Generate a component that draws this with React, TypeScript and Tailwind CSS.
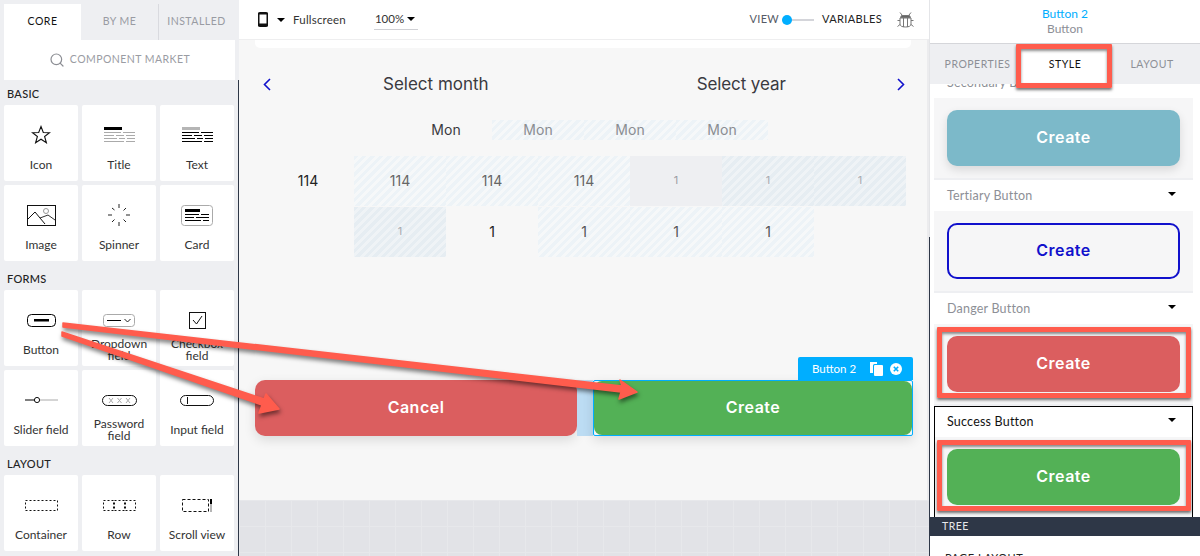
import React from 'react';
import { Search } from 'lucide-react';

const Dash = ({ x1, x2, y, c = '#000', d }: { x1: number; x2: number; y: number; c?: string; d?: string }) => (
  <line x1={x1} x2={x2} y1={y} y2={y} stroke={c} strokeWidth="1" strokeDasharray={d} />
);

const StarIcon = () => (
  <svg width="20" height="20" viewBox="0 0 20 20" fill="none" stroke="#111" strokeWidth="1.1">
    <polygon points="10,1.5 12.3,7.5 18.5,7.7 13.6,11.5 15.4,17.8 10,14.2 4.6,17.8 6.4,11.5 1.5,7.7 7.7,7.5" />
  </svg>
);

const TitleIcon = () => (
  <svg width="31" height="16" viewBox="0 0 31 16">
    <rect x="0" y="0" width="18" height="3" fill="#000" />
    <Dash x1={0} x2={31} y={5.5} c="#aaa" d="17 2 12" />
    <Dash x1={0} x2={31} y={8.5} c="#aaa" d="10 2 8 2 9" />
    <Dash x1={0} x2={31} y={11.5} c="#aaa" d="13 2 6 2 8" />
    <Dash x1={0} x2={31} y={14.5} c="#aaa" d="20 2 9" />
  </svg>
);

const TextIcon = () => (
  <svg width="31" height="16" viewBox="0 0 31 16">
    <rect x="0" y="0" width="18" height="3" fill="#b5b5b5" />
    <Dash x1={0} x2={31} y={5.5} d="17 2 12" />
    <Dash x1={0} x2={31} y={8.5} d="10 2 8 2 9" />
    <Dash x1={0} x2={31} y={11.5} d="13 2 6 2 8" />
    <Dash x1={0} x2={31} y={14.5} d="20 2 9" />
  </svg>
);

const ImageIcon = () => (
  <svg width="29" height="21" viewBox="0 0 29 21" fill="none" stroke="#111" strokeWidth="1">
    <rect x="0.5" y="0.5" width="28" height="20" />
    <polyline points="1,14 8,7 18,19" />
    <polyline points="13,13 21,10 28,15" stroke="#333" />
    <circle cx="19" cy="6" r="2.5" stroke="#999" />
  </svg>
);

const SpinnerIcon = () => (
  <svg width="24" height="24" viewBox="0 0 24 24" stroke="#222" strokeWidth="1">
    <line x1="12" y1="1" x2="12" y2="5" />
    <line x1="12" y1="19" x2="12" y2="23" />
    <line x1="1" y1="12" x2="5" y2="12" />
    <line x1="19" y1="12" x2="23" y2="12" />
    <line x1="5" y1="5" x2="7.5" y2="7" />
    <line x1="19" y1="5" x2="16.5" y2="7.5" />
    <line x1="5" y1="19" x2="7.5" y2="16.5" />
    <line x1="19" y1="19" x2="16.5" y2="16.5" />
  </svg>
);

const CardIcon = () => (
  <svg width="32" height="21" viewBox="0 0 32 21" fill="none">
    <rect x="0.5" y="0.5" width="31" height="20" rx="3" stroke="#aaa" />
    <rect x="4" y="4" width="15" height="3" fill="#000" />
    <Dash x1={4} x2={28} y={9.5} d="14 2 8" />
    <Dash x1={4} x2={28} y={12.5} d="9 2 13" />
    <Dash x1={4} x2={28} y={15.5} d="16 2 6" />
  </svg>
);

const ButtonIcon = () => (
  <svg width="29" height="13" viewBox="0 0 29 13" fill="none">
    <rect x="0.5" y="0.5" width="28" height="12" rx="4" stroke="#000" />
    <rect x="7" y="5" width="15" height="2.5" fill="#000" />
  </svg>
);

const DropdownIcon = () => (
  <svg width="33" height="13" viewBox="0 0 33 13" fill="none">
    <rect x="0.5" y="0.5" width="31" height="12" rx="3" stroke="#aaa" />
    <Dash x1={4} x2={18} y={6.5} />
    <polyline points="21.5,5 24.5,8 27.5,5" stroke="#222" />
  </svg>
);

const CheckboxIcon = () => (
  <svg width="17" height="17" viewBox="0 0 17 17" fill="none" stroke="#111">
    <rect x="0.5" y="0.5" width="16" height="16" />
    <polyline points="4,8 7.5,12 13,4" />
  </svg>
);

const SliderIcon = () => (
  <svg width="33" height="10" viewBox="0 0 33 10" fill="none">
    <Dash x1={0} x2={10} y={5} />
    <Dash x1={15} x2={33} y={5} c="#aaa" />
    <circle cx="12" cy="5" r="2.6" stroke="#111" />
  </svg>
);

const PasswordIcon = () => (
  <svg width="35" height="11" viewBox="0 0 35 11" fill="none">
    <rect x="0.5" y="0.5" width="34" height="10" rx="5" stroke="#111" />
    <g stroke="#aaa">
      <path d="M7 3l4 5M11 3l-4 5M15.5 3l4 5M19.5 3l-4 5M24 3l4 5M28 3l-4 5" />
    </g>
  </svg>
);

const InputIcon = () => (
  <svg width="34" height="11" viewBox="0 0 34 11" fill="none" stroke="#111">
    <rect x="0.5" y="0.5" width="33" height="10" rx="5" />
    <line x1="7.5" y1="2" x2="7.5" y2="9" />
  </svg>
);

const ContainerIcon = () => (
  <svg width="33" height="11" viewBox="0 0 33 11" fill="none" stroke="#111" strokeDasharray="2 2">
    <rect x="0.5" y="0.5" width="32" height="10" />
  </svg>
);

const RowIcon = () => (
  <svg width="33" height="11" viewBox="0 0 33 11" fill="none" stroke="#111" strokeDasharray="2 2">
    <rect x="0.5" y="0.5" width="10" height="10" />
    <rect x="11.5" y="0.5" width="10" height="10" />
    <rect x="22.5" y="0.5" width="10" height="10" />
  </svg>
);

const ScrollIcon = () => (
  <svg width="31" height="13" viewBox="0 0 31 13" fill="none">
    <rect x="0.5" y="0.5" width="26" height="12" stroke="#111" strokeDasharray="3 2" />
    <rect x="28" y="0" width="2" height="5" fill="#000" />
    <rect x="28" y="5" width="2" height="8" fill="#b5b5b5" />
  </svg>
);

type TileItem = { label: React.ReactNode; icon: React.ReactNode };

const Tile = ({ label, icon }: TileItem) => (
  <div className="flex h-[76px] w-[74px] flex-col items-center rounded-[2px] bg-white pt-3">
    <div className="flex h-9 items-center justify-center">{icon}</div>
    <div className="flex h-6 items-center text-center text-[12px] leading-[12px] text-[#333]">{label}</div>
  </div>
);

const TileGrid = ({ items }: { items: TileItem[] }) => (
  <div className="ml-1 grid w-[230px] grid-cols-[74px_74px_74px] gap-1">
    {items.map((t, i) => (
      <Tile key={i} {...t} />
    ))}
  </div>
);

const SectionLabel = ({ children, className }: { children: React.ReactNode; className: string }) => (
  <div className={`pl-[7px] text-[11px] font-medium leading-none tracking-[0.3px] text-[#222] ${className}`}>{children}</div>
);

const Sidebar = () => (
  <div className="flex w-[239px] shrink-0 flex-col bg-[#eeeff2] font-['Lato',sans-serif]">
    <div>
      <div className="flex pt-1 pl-1 text-[10.5px] tracking-[0.5px]">
        <div className="flex h-9 w-[77px] items-center justify-center bg-white text-[#111]">CORE</div>
        <div className="flex h-9 w-[77px] items-center justify-center text-[#999ba3]">BY ME</div>
        <div className="flex h-9 w-[76px] items-center justify-center border-l border-[#d9dadf] text-[#999ba3]">INSTALLED</div>
      </div>
      <div className="ml-1 flex h-10 w-[231px] items-center justify-center gap-[5px] bg-white text-[10.5px] tracking-[0.45px] text-[#9a9ca3]">
        <Search size={16} strokeWidth={1.8} className="text-[#8c8e94]" />
        COMPONENT MARKET
      </div>
    </div>
    <div className="flex-1 border-r border-[#2e3747]">
      <SectionLabel className="pt-2 pb-[6px]">BASIC</SectionLabel>
      <TileGrid
        items={[
          { label: 'Icon', icon: <StarIcon /> },
          { label: 'Title', icon: <TitleIcon /> },
          { label: 'Text', icon: <TextIcon /> },
          { label: 'Image', icon: <ImageIcon /> },
          { label: 'Spinner', icon: <SpinnerIcon /> },
          { label: 'Card', icon: <CardIcon /> },
        ]}
      />
      <SectionLabel className="pt-[12px] pb-[6px]">FORMS</SectionLabel>
      <TileGrid
        items={[
          { label: 'Button', icon: <ButtonIcon /> },
          { label: <>Dropdown<br />field</>, icon: <DropdownIcon /> },
          { label: <>Checkbox<br />field</>, icon: <CheckboxIcon /> },
          { label: 'Slider field', icon: <SliderIcon /> },
          { label: <>Password<br />field</>, icon: <PasswordIcon /> },
          { label: 'Input field', icon: <InputIcon /> },
        ]}
      />
      <SectionLabel className="pt-[12px] pb-[6px]">LAYOUT</SectionLabel>
      <TileGrid
        items={[
          { label: 'Container', icon: <ContainerIcon /> },
          { label: 'Row', icon: <RowIcon /> },
          { label: 'Scroll view', icon: <ScrollIcon /> },
        ]}
      />
    </div>
  </div>
);

const Caret = ({ className = '' }: { className?: string }) => (
  <span className={`inline-block h-0 w-0 border-x-[4px] border-t-[4px] border-x-transparent border-t-black ${className}`} />
);

const PhoneIcon = () => (
  <svg width="10" height="15" viewBox="0 0 10 15" fill="none">
    <rect x="0.75" y="0.75" width="8.5" height="13.5" rx="1.5" stroke="#111" strokeWidth="1.5" />
    <rect x="0" y="11.5" width="10" height="3" rx="1" fill="#111" />
    <rect x="0" y="0.5" width="10" height="2" rx="1" fill="#111" />
  </svg>
);

const BugIcon = () => (
  <svg width="17" height="16" viewBox="0 0 17 16" fill="none" stroke="#777" strokeWidth="1">
    <path d="M3 0.5l2 2.5M14 0.5l-2 2.5" />
    <path d="M4.5 3.5h8l1 2h-10z" fill="#666" />
    <path d="M3 6h11v6c0 2-2 3-5.5 3S3 14 3 12z" />
    <path d="M6.5 6v9M10.5 6v9" />
    <path d="M3 8.5H0.5M14 8.5h2.5M3 12.5l-2.5 2M14 12.5l2.5 2" />
  </svg>
);

const TopBar = () => (
  <div className="flex h-[39px] items-center bg-white pl-[19px] pr-[15px] font-['Lato',sans-serif] text-[#333]">
    <PhoneIcon />
    <Caret className="ml-[9px]" />
    <span className="ml-2 text-[11.5px] tracking-[0.2px]">Fullscreen</span>
    <div className="ml-[28px] flex h-[21px] w-11 items-center gap-[3px] border-b border-[#cfd0d4] pl-px text-[11.5px] text-[#333]">
      100%
      <Caret />
    </div>
    <div className="ml-auto text-[11px] tracking-[0.3px] text-[#555a66]">VIEW</div>
    <div className="relative ml-[3px] h-[2px] w-8 bg-[#d4d5da]">
      <span className="absolute top-[-4px] left-0 h-[10px] w-[10px] rounded-full bg-[#00aeff]" />
    </div>
    <div className="ml-2 text-[11px] tracking-[0.35px] text-[#222]">VARIABLES</div>
    <div className="ml-[15px]">
      <BugIcon />
    </div>
  </div>
);

const hatchLight = 'bg-[repeating-linear-gradient(135deg,#edf3f7_0,#edf3f7_3px,#f6f8f9_3px,#f6f8f9_6px)]';
const hatchDark = 'bg-[repeating-linear-gradient(135deg,#e6edf2_0,#e6edf2_3px,#eff3f6_3px,#eff3f6_6px)]';

const poppins = "font-['Inter',sans-serif]";

const Chevron = ({ dir }: { dir: 'l' | 'r' }) => (
  <svg width="8" height="13" viewBox="0 0 8 13" fill="none" stroke="#1111cc" strokeWidth="1.6">
    <polyline points={dir === 'l' ? '7,1 1.5,6.5 7,12' : '1,1 6.5,6.5 1,12'} />
  </svg>
);

const Cell = ({ text, cls, tone }: { text?: string; cls?: string; tone: string }) => (
  <div className={`flex h-[50px] w-[92px] items-center justify-center pb-[2px] ${tone} ${cls ?? ''}`}>{text}</div>
);

const Calendar = () => (
  <div className={poppins}>
    <div className="mt-4 flex h-10 items-center pl-6 pr-[22px]">
      <Chevron dir="l" />
      <span className="ml-[112px] pt-[2px] text-[17px] text-[#3a3a3f]">Select month</span>
      <span className="ml-[208px] pt-[2px] text-[17px] tracking-[-0.1px] text-[#3a3a3f]">Select year</span>
      <span className="ml-auto">
        <Chevron dir="r" />
      </span>
    </div>
    <div className="mt-4 ml-[161px] flex h-5 text-[14px] leading-5">
      <div className="w-[92px] text-center text-[#3a3a3f]">Mon</div>
      {[0, 1, 2].map((i) => (
        <div key={i} className={`w-[92px] text-center text-[#8a8d92] ${hatchLight}`}>
          Mon
        </div>
      ))}
    </div>
    <div className="mt-4 ml-[23px] flex">
      <Cell text="114" tone="text-[14px] text-[#222]" />
      <Cell text="114" tone="text-[14px] text-[#666]" cls={hatchLight} />
      <Cell text="114" tone="text-[14px] text-[#666]" cls={hatchLight} />
      <Cell text="114" tone="text-[14px] text-[#666]" cls={hatchLight} />
      <Cell text="1" tone="text-[11px] text-[#9a9ca3]" cls="bg-[#eeeff2]" />
      <Cell text="1" tone="text-[11px] text-[#a8abb0]" cls={hatchDark} />
      <Cell text="1" tone="text-[11px] text-[#a8abb0]" cls={hatchDark} />
    </div>
    <div className="mt-px ml-[23px] flex">
      <Cell tone="" />
      <Cell text="1" tone="text-[11px] text-[#a8abb0]" cls={hatchDark} />
      <Cell text="1" tone="text-[14px] text-[#222]" />
      <Cell text="1" tone="text-[14px] text-[#555]" cls={hatchLight} />
      <Cell text="1" tone="text-[14px] text-[#555]" cls={hatchLight} />
      <Cell text="1" tone="text-[14px] text-[#555]" cls={hatchLight} />
    </div>
  </div>
);

const ActionButtons = () => (
  <div className={`mt-auto mb-16 ml-4 flex h-14 ${poppins}`}>
    <div className="flex w-[322px] items-center justify-center rounded-[10px] bg-[#db5e5f] pb-[2px] text-[16px] font-semibold tracking-[0.5px] text-white shadow-[0_4px_12px_rgba(0,0,0,0.12)]">
      Cancel
    </div>
    <div className="w-4 bg-[#bcdcf3]" />
    <div className="relative w-[320px] rounded-[2px] border border-[#00aeff] bg-[#f0f4f6] shadow-[0_4px_12px_rgba(0,0,0,0.12)]">
      <div className="flex h-full items-center justify-center rounded-[8px] bg-[#53b156] pb-[2px] text-[16px] font-semibold tracking-[0.5px] text-white">
        Create
      </div>
      <div className="absolute -top-[24px] -right-px flex h-[23px] w-[115px] items-center rounded-t-[2px] bg-[#00aeff] pl-[14px] font-['Lato',sans-serif] text-[11.5px] font-normal tracking-normal text-white">
        Button 2
        <svg className="ml-[14px]" width="13" height="14" viewBox="0 0 13 14" fill="#fff">
          <path d="M0 0h7v2H4.5A1.5 1.5 0 0 0 3 3.5V11H0z" />
          <rect x="4" y="3" width="9" height="11" rx="1" />
        </svg>
        <svg className="ml-[7px]" width="12" height="12" viewBox="0 0 12 12">
          <circle cx="6" cy="6" r="6" fill="#fff" />
          <path d="M3.8 3.8l4.4 4.4M8.2 3.8l-4.4 4.4" stroke="#00aeff" strokeWidth="1.6" />
        </svg>
      </div>
    </div>
  </div>
);

const Center = () => (
  <div className="flex w-[690px] shrink-0 flex-col">
    <TopBar />
    <div className="flex h-[461px] flex-col border-t border-r-2 border-[#eeeeef] border-r-[#ececee] bg-[#f7f7f7]">
      <div className="mx-4 h-[8px] shrink-0 rounded-b-[5px] bg-white" />
      <Calendar />
      <ActionButtons />
    </div>
    <div className="flex-1 bg-[#e2e3e7] bg-[linear-gradient(to_right,#e7e8eb_1px,transparent_1px),linear-gradient(to_bottom,#e7e8eb_1px,transparent_1px)] bg-[size:26px_26px]" />
  </div>
);

const PreviewButton = ({ cls }: { cls: string }) => (
  <div className="h-20 bg-[#f6f6f7] px-[13px] pt-3">
    <div className={`flex h-14 items-center justify-center rounded-[10px] pb-[2px] text-[16px] font-semibold tracking-[0.5px] font-['Inter',sans-serif] ${cls}`}>
      Create
    </div>
  </div>
);

const StyleSection = ({ title, btn, active }: { title: string; btn: string; active?: boolean }) => (
  <div className={active ? 'h-[112px] outline outline-1 -outline-offset-1 outline-black' : 'border-b-2 border-[#eeeff2]'}>
    <div className={`flex h-[31px] items-center justify-between bg-white pl-[13px] pr-[17px] pt-px text-[12.5px] tracking-[0.2px] ${active ? 'text-[#111]' : 'text-[#8d8f96]'}`}>
      {title}
      <Caret className="mb-1" />
    </div>
    <PreviewButton cls={btn} />
  </div>
);

const RightPanel = () => (
  <div className="relative flex w-[270px] shrink-0 flex-col bg-white font-['Lato',sans-serif]">
    <div className="flex h-[44px] shrink-0 flex-col items-center justify-center border-b border-[#d5d6da] pb-[2px] text-[12px] leading-[15px]">
      <span className="text-[#00aeff]">Button 2</span>
      <span className="text-[#8d8f96]">Button</span>
    </div>
    <div className="flex h-10 shrink-0 bg-[#eeeff2] text-[10.5px] tracking-[0.5px] text-[#8d8f96]">
      <div className="flex w-[91px] items-center justify-center pt-[2px] pl-1">PROPERTIES</div>
      <div className="flex w-[86px] items-center justify-center bg-white pt-[2px] pl-[2px] text-[#111]">STYLE</div>
      <div className="flex w-[90px] items-center justify-center pt-[2px]">LAYOUT</div>
    </div>
    <div className="h-[433px] shrink-0 overflow-hidden pl-1 pr-[7px]">
      <div className="-mt-[17px]">
        <StyleSection title="Secondary Button" btn="bg-[#7cb9c9] text-white shadow-[0_4px_10px_rgba(0,0,0,0.12)]" />
        <StyleSection title="Tertiary Button" btn="border-2 border-[#1111cc] text-[#1111cc]" />
        <StyleSection title="Danger Button" btn="bg-[#db5e5f] text-white" />
        <StyleSection title="Success Button" active btn="bg-[#53b156] text-white" />
      </div>
    </div>
    <div className="flex h-[19px] shrink-0 items-center bg-[#2e3747] pl-3 text-[10.5px] tracking-[0.5px] text-[#e8e9ec]">TREE</div>
    <div className="pt-[14px] pl-[15px] text-[11px] tracking-[0.5px] text-[#222]">PAGE LAYOUT</div>
  </div>
);

const RedBox = ({ cls }: { cls: string }) => (
  <div className={`absolute rounded-[1px] border-[5px] border-[#ff5c4d] shadow-[0_2px_3px_rgba(0,0,0,0.55),inset_0_2px_3px_rgba(0,0,0,0.45)] ${cls}`} />
);

const Annotations = () => (
  <>
    <svg className="pointer-events-none absolute top-0 left-0 drop-shadow-[1px_3px_2px_rgba(0,0,0,0.5)]" width="1200" height="556" viewBox="0 0 1200 556" fill="#ff5c4d" stroke="#ff5c4d" strokeLinejoin="round" strokeWidth="1.5">
      <polygon points="63,323 622,386 620,380 637,392 619,399 621,392 63,327" />
      <polygon points="62,332 264,399 266,394 279,409 259,413 262,405 62,336" />
    </svg>
    <RedBox cls="left-[1016px] top-[44px] h-[44px] w-[96px]" />
    <RedBox cls="left-[937px] top-[327px] h-[71px] w-[254px]" />
    <RedBox cls="left-[937px] top-[440px] h-[71px] w-[254px]" />
  </>
);

export default function App() {
  return (
    <div className="relative flex h-[556px] w-[1200px] overflow-hidden bg-white">
      <Sidebar />
      <Center />
      <div className="flex w-px shrink-0 flex-col">
        <div className="h-[237px] bg-[#e4e5e8]" />
        <div className="flex-1 bg-[#2e3747]" />
      </div>
      <RightPanel />
      <Annotations />
    </div>
  );
}
